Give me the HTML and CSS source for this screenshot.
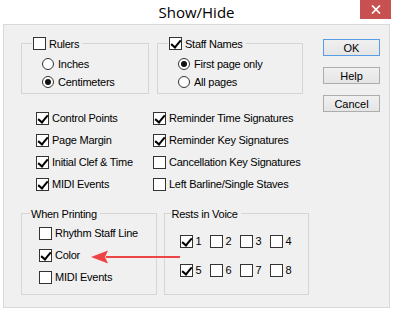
FILE: index.html
```html
<!doctype html>
<html>
    <head>
        <meta charset="utf-8">
        <title>Show/Hide</title>
        <link rel="stylesheet" href="styles.css">
    </head>
    <body>
        <div class="window">
            <div class="titlebar">
                <span></span>
                <span class="title">Show/Hide</span>
                <button class="close" type="button">
                    <svg width="10" height="9" viewBox="0 0 10 9"><path d="M1 0.5 L9 8.5 M9 0.5 L1 8.5" stroke="#fff" stroke-width="1.7" fill="none"/></svg>
                </button>
            </div>
            <div class="client">
                <div class="main">
                    <div class="row">
                        <fieldset class="group rulers">
                            <legend><span class="lab"><span class="box"></span>Rulers</span></legend>
                            <div class="opt"><span class="radio"></span>Inches</div>
                            <div class="opt"><span class="radio on"></span>Centimeters</div>
                        </fieldset>
                        <fieldset class="group staff">
                            <legend><span class="lab"><span class="box on"></span>Staff Names</span></legend>
                            <div class="opt"><span class="radio on"></span>First page only</div>
                            <div class="opt"><span class="radio"></span>All pages</div>
                        </fieldset>
                    </div>

                    <div class="options">
                        <div class="item"><span class="box on"></span>Control Points</div>
                        <div class="item"><span class="box on"></span>Page Margin</div>
                        <div class="item"><span class="box on"></span>Initial Clef &amp; Time</div>
                        <div class="item"><span class="box on"></span>MIDI Events</div>
                        <div class="item"><span class="box on"></span>Reminder Time Signatures</div>
                        <div class="item"><span class="box on"></span>Reminder Key Signatures</div>
                        <div class="item"><span class="box"></span>Cancellation Key Signatures</div>
                        <div class="item"><span class="box"></span>Left Barline/Single Staves</div>
                    </div>

                    <div class="row">
                        <fieldset class="group printing">
                            <legend><span class="lab">When Printing</span></legend>
                            <div class="item"><span class="box"></span>Rhythm Staff Line</div>
                            <div class="item"><span class="box on"></span>Color</div>
                            <div class="item"><span class="box"></span>MIDI Events</div>
                        </fieldset>
                        <fieldset class="group rests">
                            <legend><span class="lab">Rests in Voice</span></legend>
                            <div class="voices">
                                <div class="item"><span class="box on"></span>1</div>
                                <div class="item"><span class="box"></span>2</div>
                                <div class="item"><span class="box"></span>3</div>
                                <div class="item"><span class="box"></span>4</div>
                                <div class="item"><span class="box on"></span>5</div>
                                <div class="item"><span class="box"></span>6</div>
                                <div class="item"><span class="box"></span>7</div>
                                <div class="item"><span class="box"></span>8</div>
                            </div>
                        </fieldset>
                    </div>
                </div>

                <div class="buttons">
                    <button class="btn default" type="button">OK</button>
                    <button class="btn" type="button">Help</button>
                    <button class="btn" type="button">Cancel</button>
                </div>
            </div>

            <!-- red annotation arrow pointing at "Color" -->
            <svg class="arrow" width="92" height="16" viewBox="0 0 92 16">
                <path d="M16 8 L90 8" stroke="#ee4444" stroke-width="2"/>
                <path d="M1 8 L18 1.5 L15 8 L18 14.5 Z" fill="#ee4444"/>
            </svg>
        </div>
    </body>
</html>
```

FILE: styles.css
```css
* { margin: 0; padding: 0; box-sizing: border-box; }

body {
    width: 393px;
    height: 310px;
    overflow: hidden;
    background: #fff;
    color: #000;
    font-family: "Liberation Sans", Arial, sans-serif;
    font-size: 11px;
    letter-spacing: -0.25px;
}

.window {
    position: relative;
    height: 310px;
    display: flex;
    flex-direction: column;
}

/* title bar */
.titlebar {
    height: 24px;
    display: grid;
    grid-template-columns: 1fr auto 1fr;
}

.title {
    font-family: "Open Sans", sans-serif;
    font-size: 15px;
    letter-spacing: 0;
    line-height: 22px;
    padding-top: 1px;
}

.close {
    justify-self: end;
    width: 31px;
    height: 19px;
    margin-right: 2px;
    border: none;
    background: #c75050;
    display: flex;
    align-items: center;
    justify-content: center;
}

/* client area */
.client {
    flex: 1;
    margin: 0 3px 2px;
    padding-left: 17px;
    border: 1px solid #d9d9d9;
    background: #f0f0f0;
    display: flex;
}

.main {
    width: 288px;
}

.row {
    display: flex;
    align-items: stretch;
}

.group {
    margin: 0;
    min-width: 0;
    border: 1px solid #d5d5d5;
}

.group legend {
    padding: 0 1px;
}

.lab {
    display: flex;
    align-items: center;
    height: 13px;
    padding-right: 2px;
}

.rulers {
    margin-top: 12px;
    width: 128px;
    padding: 5px 0 2px 10px;
}

.staff {
    margin: 12px 0 0 8px;
    width: 146px;
    padding: 5px 0 2px 10px;
}

.opt {
    display: flex;
    align-items: center;
    height: 18px;
    margin-left: 10px;
}

.item {
    display: flex;
    align-items: center;
    height: 22px;
    white-space: nowrap;
}

.options {
    margin-top: 13px;
    padding-left: 15px;
    display: grid;
    grid-template-columns: 117px auto;
    grid-template-rows: repeat(4, 22px);
    grid-auto-flow: column;
}

.printing {
    margin-top: 12px;
    width: 136px;
    padding: 2px 0 6px 8px;
}

.printing .item {
    margin-left: 9px;
}

.rests {
    margin: 12px 0 0 7px;
    width: 146px;
    padding: 10px 0 0 6px;
}

.voices {
    margin-left: 9px;
    display: grid;
    grid-template-columns: repeat(4, 30px);
    row-gap: 7px;
}

/* checkbox and radio */
.box {
    position: relative;
    flex: none;
    width: 13px;
    height: 13px;
    margin-right: 3px;
    border: 1px solid #333;
    background: #fff;
}

.box.on::after {
    content: "";
    position: absolute;
    left: 3px;
    top: 0px;
    width: 4px;
    height: 8px;
    border: solid #000;
    border-width: 0 2px 2px 0;
    transform: rotate(40deg);
}

.radio {
    position: relative;
    flex: none;
    width: 12px;
    height: 12px;
    margin-right: 4px;
    border: 1px solid #333;
    border-radius: 50%;
    background: #fff;
}

.radio.on::after {
    content: "";
    position: absolute;
    left: 2px;
    top: 2px;
    width: 6px;
    height: 6px;
    border-radius: 50%;
    background: #111;
}

/* buttons */
.buttons {
    width: 57px;
    margin: 14px 0 0 14px;
    display: flex;
    flex-direction: column;
    gap: 11px;
}

.btn {
    height: 17px;
    border: 1px solid #adadad;
    background: linear-gradient(#f0f0f0, #e5e5e5);
    font-family: "Liberation Sans", Arial, sans-serif;
    font-size: 11px;
    color: #000;
}

.btn.default {
    border-color: #569de5;
}

.arrow {
    position: absolute;
    left: 90px;
    top: 249px;
}
```
